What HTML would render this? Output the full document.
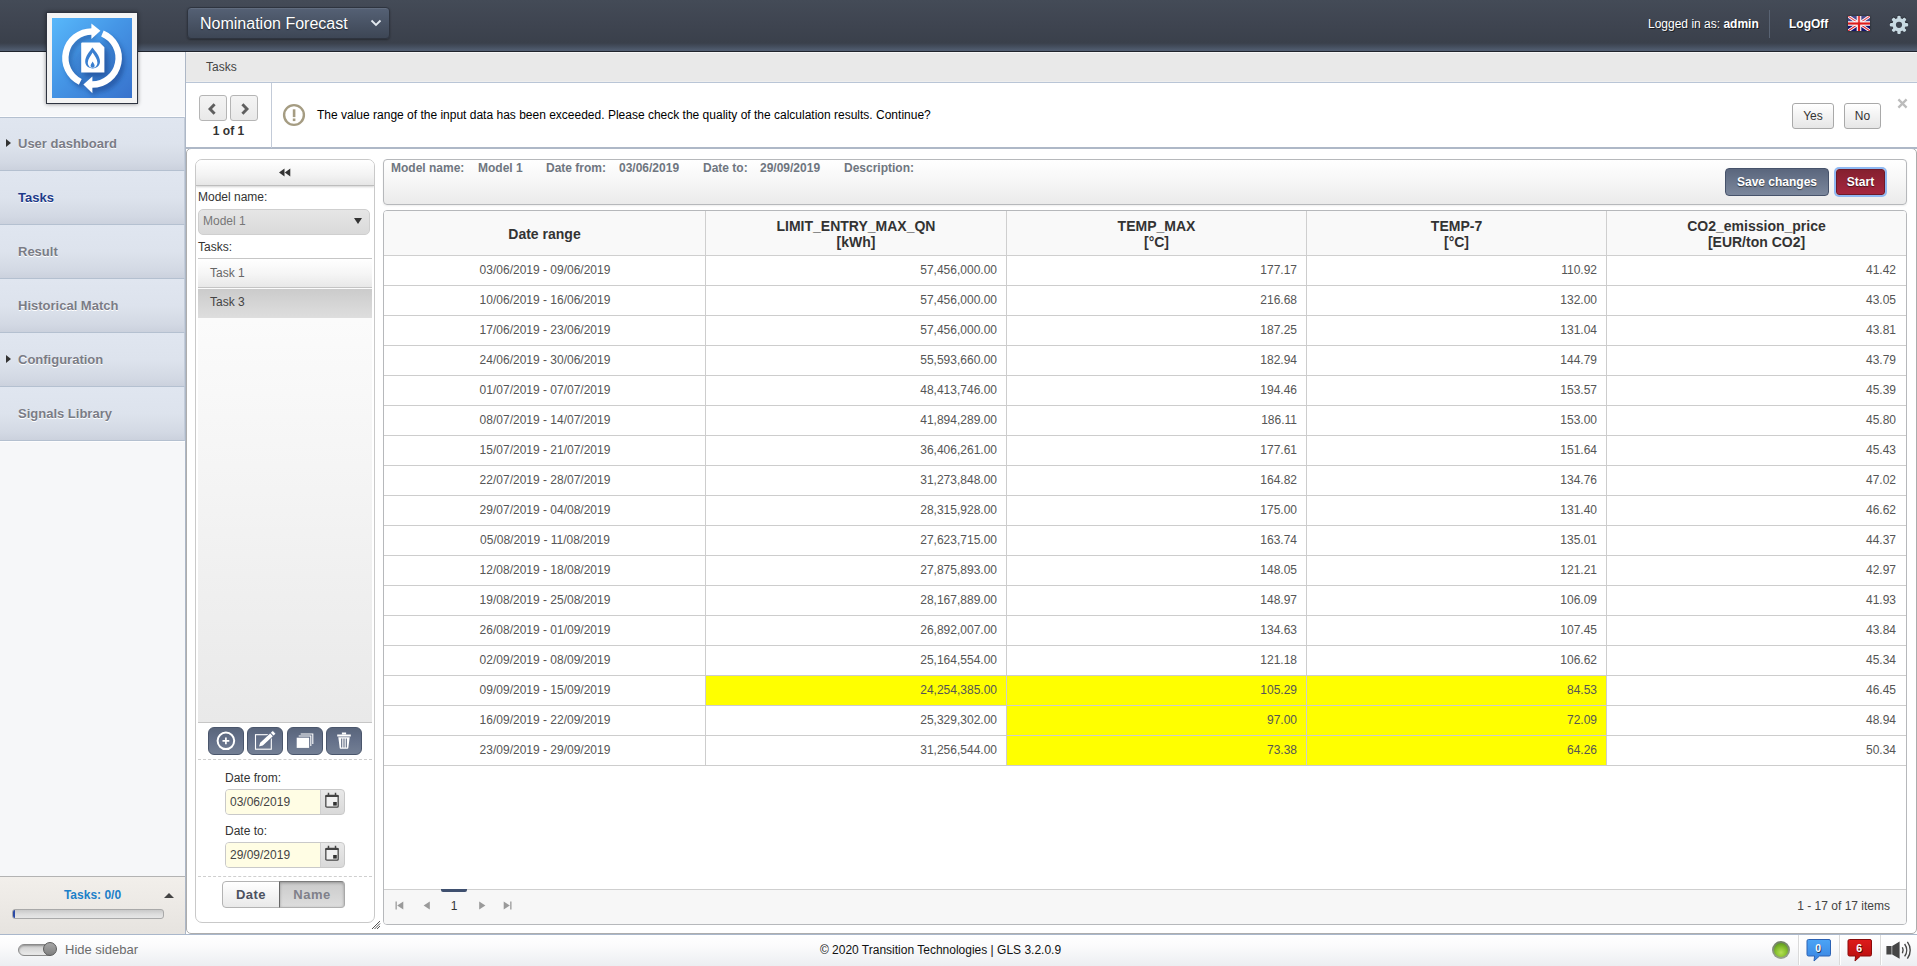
<!DOCTYPE html>
<html>
<head>
<meta charset="utf-8">
<title>Nomination Forecast</title>
<style>
*{box-sizing:border-box;margin:0;padding:0;}
html,body{width:1917px;height:966px;overflow:hidden;background:#fff;font-family:"Liberation Sans",sans-serif;font-size:12px;color:#333;}
.abs{position:absolute;}
/* header */
#hdr{position:absolute;left:0;top:0;width:1917px;height:52px;background:linear-gradient(#444b57 0px,#3f4551 22px,#3a404b 43px,#454f5f 47px,#525e71 50.6px,#1f242d 51px,#1f242d 52px);}
#appsel{position:absolute;left:187px;top:7px;width:203px;height:32px;border-radius:4px;border:1px solid #2e343f;background:linear-gradient(#556175,#3d4655);box-shadow:0 1px 2px rgba(0,0,0,.35),inset 0 1px 0 rgba(255,255,255,.08);color:#fff;font-size:16px;line-height:31px;padding-left:12px;text-shadow:0 1px 1px rgba(0,0,0,.5);}
#hdr .t{position:absolute;top:17px;color:#fff;font-size:12px;line-height:14px;text-shadow:1px 1px 0 rgba(0,0,0,.6);white-space:nowrap;}
/* sidebar */
#side{position:absolute;left:0;top:52px;width:186px;height:882px;background:#f6f7f9;border-right:1px solid #adb7c6;}
.mi{position:absolute;left:0;width:185px;height:54px;background:linear-gradient(#e0e6f0 0%,#dde3ed 50%,#d3d9e4 85%,#cbd1dd 100%);border-bottom:1px solid #b4c0d0;border-right:1px solid #c3ccd9;color:#7a7c86;font-weight:bold;font-size:13px;line-height:53px;padding-left:18px;text-shadow:0 1px 0 #fff;}
.mi .ar{position:absolute;left:6px;top:22px;width:0;height:0;border-left:5px solid #333;border-top:4px solid transparent;border-bottom:4px solid transparent;}
#logo{position:absolute;left:46px;top:12px;width:92px;height:92px;background:#f4f4f4;border:1px solid #2f3440;box-shadow:0 0 4px rgba(0,0,0,.45);}
#logo .in{position:absolute;left:5px;top:5px;width:80px;height:80px;background:linear-gradient(135deg,#58b8fb 0%,#4596e6 45%,#3872cc 100%);}
/* footer */
#ftr{position:absolute;left:0;top:934px;width:1917px;height:32px;border-top:1px solid #a9b7cb;background:linear-gradient(#ffffff 0%,#fbfbfc 35%,#eceef2 100%);}
/* main */
#crumb{position:absolute;left:186px;top:52px;width:1731px;height:31px;background:#e9e9e9;border-bottom:1px solid #b9c5d6;font-size:12px;line-height:31px;padding-left:20px;color:#444;box-shadow:inset 0 -1px 0 #eeeeee,inset 0 1px 0 #f6f6f6;}
#note{z-index:2;position:absolute;left:186px;top:83px;width:1731px;height:66px;background:#fff;border-bottom:2px solid #aeb8c7;}
.btnw{position:absolute;border:1px solid #a9a9a9;border-radius:3px;background:linear-gradient(#ffffff,#e6e6e6);color:#333;font-size:12px;text-align:center;}

/* notification */
.navb{position:absolute;top:12px;width:28px;height:26px;border:1px solid #b5b5b5;border-radius:3px;background:linear-gradient(#f4f4f4,#e9e9e9);}
/* content */
#content{position:absolute;left:186px;top:148px;width:1731px;height:786px;background:#fff;border:1px solid #adadad;border-radius:5px;}
#lp{position:absolute;left:195px;top:159px;width:180px;height:764px;border:1px solid #c9c9c9;border-radius:7px;background:#fff;overflow:hidden;}
#lph{position:absolute;left:0;top:0;width:178px;height:26px;background:linear-gradient(#ffffff,#f3f3f3 60%,#e6e6e6);border-bottom:1px solid #bdbdbd;box-shadow:0 1px 2px rgba(0,0,0,.18);}
.lbl{position:absolute;font-size:12px;line-height:14px;color:#333;white-space:nowrap;}
#msel{position:absolute;left:2px;top:49px;width:172px;height:26px;border:1px solid #cfcfcf;border-radius:5px;background:linear-gradient(#e6e6e6,#dadada);color:#777;font-size:12px;line-height:22px;padding-left:4px;}
#tlist{position:absolute;left:2px;top:98px;width:174px;height:465px;border-top:1px solid #c6c6c6;border-bottom:1px solid #c6c6c6;background:linear-gradient(#fbfbfb 60px,#f4f4f4 50%,#e9e9e9 100%);}
.ti{position:absolute;left:0;width:174px;height:30px;font-size:12px;line-height:28px;padding-left:12px;color:#666;}
.ib{position:absolute;top:567px;width:36px;height:28px;border:1px solid #4a566c;border-radius:6px;background:linear-gradient(#59657b,#65718a 50%,#737f94);overflow:hidden;}
.dash{position:absolute;left:2px;width:174px;height:0;border-top:1px dashed #cfcfcf;}
.dinp{position:absolute;left:29px;width:120px;height:26px;border:1px solid #c9c9c9;border-radius:4px;background:linear-gradient(#e9e9e9,#d9d9d9);overflow:hidden;}
.dinp .tx{position:absolute;left:0;top:0;width:95px;height:24px;background:#fffde4;border-right:1px solid #cfcfcf;font-size:12px;line-height:25px;padding-left:4px;color:#444;}
/* details */
#dp{position:absolute;left:383px;top:159px;width:1524px;height:46px;border:1px solid #b6b8bb;border-radius:4px;box-shadow:0 1px 2px rgba(0,0,0,.07);background:linear-gradient(#ffffff,#f6f6f6 50%,#ebebeb);}
#dp .d{position:absolute;top:1px;font-size:12px;line-height:14px;font-weight:bold;color:#6f7680;white-space:nowrap;}

/* grid */
#grid{position:absolute;left:383px;top:210px;width:1524px;height:715px;border:1px solid #b6b8bb;border-radius:4px;background:#fff;overflow:hidden;}
#gh{position:absolute;left:0;top:0;width:1522px;height:45px;background:#f9f9f9;border-bottom:1px solid #cfcfcf;}
.hc{position:absolute;top:0;height:45px;border-left:1px solid #cfcfcf;text-align:center;font-weight:bold;font-size:14px;line-height:16px;color:#333;padding-top:7px;}
.gr{position:absolute;left:0;width:1522px;height:30px;border-bottom:1px solid #cdcdcd;}
.gc{position:absolute;top:0;height:29px;border-left:1px solid #cdcdcd;font-size:12px;line-height:29px;color:#555;text-align:right;padding-right:9px;white-space:nowrap;}
.gc.c0{left:0;width:321px;border-left:0;text-align:center;padding-right:0;padding-left:1px;}
.c1{left:321px;width:301px;}
.c2{left:622px;width:300px;}
.c3{left:922px;width:300px;}
.c4{left:1222px;width:300px;padding-right:10px;}
.y{background:#ffff00;}
#pg{position:absolute;left:0;top:678px;width:1522px;height:36px;border-top:1px solid #cfcfcf;background:#f7f7f7;}
.bsave{position:absolute;left:1725px;top:168px;width:104px;height:28px;border:1px solid #46526a;border-radius:4px;background:linear-gradient(#5a667d,#7b879c);color:#fff;font-weight:bold;font-size:12px;line-height:26px;text-align:center;text-shadow:0 1px 1px rgba(0,0,0,.55);}
.bstart{position:absolute;left:1836px;top:169px;width:49px;height:26px;border:1px solid #6d1a2a;border-radius:3px;background:linear-gradient(#85202f,#a5263f);color:#fff;font-weight:bold;font-size:12px;line-height:24px;text-align:center;text-shadow:0 1px 1px rgba(0,0,0,.55);box-shadow:0 0 0 2px #8fb8f2;}

/* sidebar bottom */
#stask{position:absolute;left:0;top:876px;width:185px;height:58px;border-top:1px solid #b3b3b3;background:linear-gradient(#f2efeb,#ebe8e4 60%,#e6e3df);}
#pbar{position:absolute;left:12px;top:32px;width:152px;height:10px;border:1px solid #a9a9a9;border-radius:3px;background:linear-gradient(#c9c9c9,#dcdcdc 50%,#e6e6e6);overflow:hidden;}
.fcell{position:absolute;top:0;width:41px;height:30px;border-left:1px solid #dadada;box-shadow:inset 1px 0 0 #fff;}
.dnb{position:absolute;top:721px;height:27px;border:1px solid #b3b3b3;font-weight:bold;font-size:13px;line-height:25px;text-align:center;letter-spacing:.5px;}
</style>
</head>
<body>
<!-- HEADER -->
<div id="hdr">
  <div id="appsel">Nomination Forecast
    <svg class="abs" style="left:182px;top:11px" width="12" height="9" viewBox="0 0 12 9"><path d="M1.5 1.5 L6 6 L10.5 1.5" fill="none" stroke="#e4eaf0" stroke-width="1.8"/></svg>
  </div>
  <div class="t" style="left:1648px">Logged in as: <b>admin</b></div>
  <div class="abs" style="left:1769px;top:10px;width:1px;height:28px;background:#596373"></div>
  <div class="t" style="left:1789px;font-weight:bold">LogOff</div>
  <svg class="abs" style="left:1848px;top:16px;filter:drop-shadow(0 0 1px rgba(0,0,0,.5))" width="22" height="15" viewBox="0 0 60 40" preserveAspectRatio="none"><rect width="60" height="40" fill="#14146e"/><path d="M0 0 L60 40 M60 0 L0 40" stroke="#fff" stroke-width="8"/><path d="M0 0 L60 40 M60 0 L0 40" stroke="#e0242f" stroke-width="3"/><path d="M30 0 V40 M0 20 H60" stroke="#fff" stroke-width="12.5"/><path d="M30 0 V40" stroke="#dd1a1a" stroke-width="6.4"/><path d="M0 20 H60" stroke="#dd1a1a" stroke-width="6"/><rect width="60" height="17" fill="#fff" opacity=".22"/></svg>
  <svg class="abs" style="left:1889px;top:15px;filter:drop-shadow(0 -1px 0 rgba(15,18,24,.55))" width="20" height="20" viewBox="0 0 20 20"><g fill="#c9dae3"><g transform="translate(10 9.8)"><rect x="-1.7" y="-9.1" width="3.4" height="18.2" rx="1.2"/><rect x="-1.7" y="-9.1" width="3.4" height="18.2" rx="1.2" transform="rotate(45)"/><rect x="-1.7" y="-9.1" width="3.4" height="18.2" rx="1.2" transform="rotate(90)"/><rect x="-1.7" y="-9.1" width="3.4" height="18.2" rx="1.2" transform="rotate(135)"/><circle r="6.7"/></g></g><circle cx="10" cy="9.8" r="3.1" fill="#3f4551"/></svg>
</div>

<!-- SIDEBAR -->
<div id="side">
  <div class="abs" style="left:0;top:64px;width:185px;height:1px;background:#fdfdfe"></div>
  <div class="mi" style="top:65px;box-shadow:inset 0 1px 0 #b4c0d0"><span class="ar"></span>User dashboard</div>
  <div class="mi" style="top:119px;color:#1d3a8a">Tasks</div>
  <div class="mi" style="top:173px">Result</div>
  <div class="mi" style="top:227px">Historical Match</div>
  <div class="mi" style="top:281px"><span class="ar"></span>Configuration</div>
  <div class="mi" style="top:335px">Signals Library</div>
  <div class="abs" style="left:0;top:389px;width:185px;height:1px;background:#fdfdfe"></div>
</div>
<div id="stask">
  <div class="abs" style="left:0;top:11px;width:185px;text-align:center;font-weight:bold;font-size:12px;line-height:14px;color:#1b80c9">Tasks: 0/0</div>
  <div class="abs" style="left:164px;top:16px;width:0;height:0;border-bottom:5px solid #444;border-left:5px solid transparent;border-right:5px solid transparent"></div>
  <div id="pbar"><div class="abs" style="left:0;top:0;width:2px;height:8px;background:#2c4aa6"></div></div>
</div>
<div id="logo"><div class="in"><svg class="abs" style="left:0;top:0" width="80" height="80" viewBox="0 0 80 80">
<defs><radialGradient id="lg" cx="0.52" cy="0.56" r="0.42"><stop offset="0" stop-color="#1f4f95" stop-opacity=".45"/><stop offset=".75" stop-color="#2a5aa8" stop-opacity=".28"/><stop offset="1" stop-color="#2a5aa8" stop-opacity="0"/></radialGradient></defs>
<circle cx="43" cy="45" r="34" fill="url(#lg)"/>
<filter id="lb" x="-20%" y="-20%" width="140%" height="140%"><feGaussianBlur stdDeviation="2.6"/></filter>
<g transform="translate(3 4)" filter="url(#lb)" opacity=".5" fill="#163f86" stroke="#163f86"><path d="M28.3 63.9 A26.6 26.6 0 0 1 40 13.4" fill="none" stroke-width="6.5"/><path d="M50.4 15.5 A26.6 26.6 0 0 1 40 66.6" fill="none" stroke-width="6.5"/><path d="M40.4 58.4 L31.4 66.6 L40.4 75.2 Z" stroke="none"/><path d="M30.2 24.4 H47.6 L52.4 29.2 V54.4 H29.2 Z" stroke="none"/></g>
<path d="M28.3 63.9 A26.6 26.6 0 0 1 40 13.4" fill="none" stroke="#fff" stroke-width="6.5"/>
<path d="M39.4 5.4 L48.4 12.7 L39.4 20.9 Z" fill="#fff"/>
<path d="M50.4 15.5 A26.6 26.6 0 0 1 40 66.6" fill="none" stroke="#fff" stroke-width="6.5"/>
<path d="M40.4 58.4 L31.4 66.6 L40.4 75.2 Z" fill="#fff"/>
<path d="M30.2 24.4 H47.6 L52.4 29.2 V54.4 H29.2 V25.4 Q29.2 24.4 30.2 24.4 Z" fill="#fff"/>
<path d="M40.4 29.6 C43.6 33.6 48 38.4 48 43.6 C48 47.6 44.8 50.4 40.8 50.4 C36.4 50.4 33.2 47.6 33.2 43.6 C33.2 38.4 37.6 33.6 40.4 29.6 Z" fill="#3a7fd0"/>
<path d="M40.6 34.4 C42.6 37.6 45.4 41 45.4 44.6 C45.4 47.8 43.2 50 40.6 50 C38 50 35.8 47.8 35.8 44.6 C35.8 41 38.8 37.6 40.6 34.4 Z" fill="#fff"/>
<path d="M40.6 43.6 C41.6 45.2 42.6 46.4 42.6 47.8 C42.6 49 41.6 49.8 40.6 49.8 C39.6 49.8 38.6 49 38.6 47.8 C38.6 46.4 39.8 45.2 40.6 43.6 Z" fill="#3a7fd0"/>
</svg></div></div>

<!-- MAIN -->
<div id="crumb">Tasks</div>
<div id="note">
  <div class="navb" style="left:13px"><svg class="abs" style="left:7px;top:7px" width="10" height="12" viewBox="0 0 10 12"><path d="M7.6 1.2 L3 6 L7.6 10.8" fill="none" stroke="#5f5f5f" stroke-width="2.9"/></svg></div>
  <div class="navb" style="left:44px"><svg class="abs" style="left:9px;top:7px" width="10" height="12" viewBox="0 0 10 12"><path d="M2.4 1.2 L7 6 L2.4 10.8" fill="none" stroke="#5f5f5f" stroke-width="2.9"/></svg></div>
  <div class="abs" style="left:13px;top:41px;width:59px;text-align:center;font-weight:bold;font-size:12px;line-height:15px;color:#333">1 of 1</div>
  <div class="abs" style="left:85px;top:0;width:1px;height:65px;background:#c3cbd8"></div>
  <svg class="abs" style="left:96px;top:20px" width="24" height="24" viewBox="0 0 24 24"><circle cx="12" cy="12" r="9.9" fill="none" stroke="#a59c82" stroke-width="2.4"/><rect x="10.8" y="6.3" width="2.6" height="7.8" fill="#a59c82"/><rect x="10.8" y="15.5" width="2.6" height="2.6" fill="#a59c82"/></svg>
  <div class="abs" style="left:131px;top:25px;font-size:12px;line-height:14px;color:#000;white-space:nowrap">The value range of the input data has been exceeded. Please check the quality of the calculation results. Continue?</div>
  <div class="btnw" style="left:1606px;top:20px;width:42px;height:26px;line-height:24px">Yes</div>
  <div class="btnw" style="left:1658px;top:20px;width:37px;height:26px;line-height:24px">No</div>
  <svg class="abs" style="left:1711px;top:15px" width="11" height="11" viewBox="0 0 11 11"><path d="M1.4 1.4 L9.6 9.6 M9.6 1.4 L1.4 9.6" stroke="#bcbcbc" stroke-width="2.3" fill="none"/></svg>
</div>
<div id="content"></div>
<div id="lp">
  <div id="lph"><svg class="abs" style="left:83px;top:8px" width="12" height="9" viewBox="0 0 12 9"><path d="M0 4.5 L5.5 0.5 V8.5 Z M5.8 4.5 L11.3 0.5 V8.5 Z" fill="#333"/></svg></div>
  <div class="lbl" style="left:2px;top:30px">Model name:</div>
  <div id="msel">Model 1<span class="abs" style="left:155px;top:8px;width:0;height:0;border-top:6px solid #333;border-left:4px solid transparent;border-right:4px solid transparent"></span></div>
  <div class="lbl" style="left:2px;top:80px">Tasks:</div>
  <div id="tlist">
    <div class="ti" style="top:0;height:29px;background:linear-gradient(#ffffff,#f5f5f5 55%,#e8e8e8);border-bottom:1px solid #c4c4c4">Task 1</div>
    <div class="ti" style="top:30px;height:29px;line-height:27px;background:linear-gradient(#cbcbcb,#d5d5d5 50%,#dedede);color:#444">Task 3</div>
  </div>
  <div class="ib" style="left:12px"><svg class="abs" style="left:0;top:0" width="34" height="26" viewBox="0 0 34 26"><circle cx="16.9" cy="12.8" r="8.3" fill="none" stroke="#fff" stroke-width="2"/><path d="M16.9 9.4 V16.2 M13.5 12.8 H20.3" stroke="#fff" stroke-width="1.7"/></svg></div>
  <div class="ib" style="left:51px"><svg class="abs" style="left:0;top:0" width="34" height="26" viewBox="0 0 34 26"><rect x="7.5" y="6.7" width="15.8" height="14.5" fill="none" stroke="#fff" stroke-width="1.1"/><g stroke="#64718a" stroke-width="1.6" stroke-linejoin="round"><path d="M11 18.6 L14.81 17.58 L24.81 8.18 L22.19 5.42 L12.19 14.82 Z" fill="#fff"/><path d="M25.51 7.46 L27.41 5.67 L24.79 2.91 L22.89 4.7 Z" fill="#fff"/></g><path d="M11 18.6 L14.81 17.58 L24.81 8.18 L22.19 5.42 L12.19 14.82 Z" fill="#fff"/><path d="M25.51 7.46 L27.41 5.67 L24.79 2.91 L22.89 4.7 Z" fill="#fff"/></svg></div>
  <div class="ib" style="left:91px"><svg class="abs" style="left:0;top:0" width="34" height="26" viewBox="0 0 34 26"><path d="M12.7 6 H24.8 V16" fill="none" stroke="#fff" stroke-width="1.1"/><path d="M10.7 8 H22.8 V18" fill="none" stroke="#fff" stroke-width="1.1"/><rect x="8.7" y="9.7" width="12.4" height="10.2" fill="#fff"/></svg></div>
  <div class="ib" style="left:130px"><svg class="abs" style="left:0;top:0" width="34" height="26" viewBox="0 0 34 26"><path d="M14.9 4.6 H19.1 V6.6 H14.9 Z" fill="#fff"/><path d="M10.2 6.6 H23.8 V8.4 H10.2 Z" fill="#fff"/><path d="M11.3 9.2 H22.7 L21.3 20 Q21.2 20.8 20.4 20.8 H13.6 Q12.8 20.8 12.7 20 Z" fill="#fff"/><path d="M14.7 10.4 V19.4 M17 10.4 V19.4 M19.3 10.4 V19.4" stroke="#5d6980" stroke-width="1.1"/></svg></div>
  <div class="dash" style="top:599px"></div>
  <div class="lbl" style="left:29px;top:611px">Date from:</div>
  <div class="dinp" style="top:629px"><div class="tx">03/06/2019</div><svg class="abs" style="left:98px;top:2px" width="16" height="17" viewBox="0 0 15 16"><rect x="1.7" y="3.2" width="11.6" height="11.1" rx="1" fill="#f1f1f1" stroke="#444" stroke-width="1.2"/><path d="M1.2 3 H13.8 V4.7 H1.2 Z" fill="#444"/><path d="M4.2 0.8 V3.4 M10.8 0.8 V3.4" stroke="#444" stroke-width="1.4"/><rect x="8.6" y="9.4" width="3.4" height="3.4" fill="#333"/></svg></div>
  <div class="lbl" style="left:29px;top:664px">Date to:</div>
  <div class="dinp" style="top:682px"><div class="tx">29/09/2019</div><svg class="abs" style="left:98px;top:2px" width="16" height="17" viewBox="0 0 15 16"><rect x="1.7" y="3.2" width="11.6" height="11.1" rx="1" fill="#f1f1f1" stroke="#444" stroke-width="1.2"/><path d="M1.2 3 H13.8 V4.7 H1.2 Z" fill="#444"/><path d="M4.2 0.8 V3.4 M10.8 0.8 V3.4" stroke="#444" stroke-width="1.4"/><rect x="8.6" y="9.4" width="3.4" height="3.4" fill="#333"/></svg></div>
  <div class="dash" style="top:716px"></div>
  <div class="dnb" style="left:26px;width:58px;border-radius:4px 0 0 4px;background:linear-gradient(#ffffff,#e9e9e9);color:#4c5260">Date</div>
  <div class="dnb" style="left:83px;width:66px;border-radius:0 4px 4px 0;background:linear-gradient(#cbcbcb,#dddddd);color:#80808a;border-color:#7c7c7c #a8a8a8 #b0b0b0 #666;box-shadow:inset 0 1px 3px rgba(0,0,0,.28)">Name</div>
</div>
<svg class="abs" style="left:371px;top:920px" width="10" height="10" viewBox="0 0 10 10"><path d="M9 1 L1 9 M9 3.5 L3.5 9 M9 6 L6 9" stroke="#555" stroke-width="1" fill="none"/></svg>
<div id="dp">
  <div class="d" style="left:7px">Model name:</div>
  <div class="d" style="left:94px">Model 1</div>
  <div class="d" style="left:162px">Date from:</div>
  <div class="d" style="left:235px">03/06/2019</div>
  <div class="d" style="left:319px">Date to:</div>
  <div class="d" style="left:376px">29/09/2019</div>
  <div class="d" style="left:460px">Description:</div>
</div>
<div id="grid">
<div id="gh">
<div class="hc" style="left:0;width:321px;border-left:0;padding-top:15px">Date range</div>
<div class="hc" style="left:321px;width:301px">LIMIT_ENTRY_MAX_QN<br>[kWh]</div>
<div class="hc" style="left:622px;width:300px">TEMP_MAX<br>[&#176;C]</div>
<div class="hc" style="left:922px;width:300px">TEMP-7<br>[&#176;C]</div>
<div class="hc" style="left:1222px;width:300px">CO2_emission_price<br>[EUR/ton CO2]</div>
</div>
<div class="gr" style="top:45px">
<div class="gc c0">03/06/2019 - 09/06/2019</div>
<div class="gc c1">57,456,000.00</div>
<div class="gc c2">177.17</div>
<div class="gc c3">110.92</div>
<div class="gc c4">41.42</div>
</div>
<div class="gr" style="top:75px">
<div class="gc c0">10/06/2019 - 16/06/2019</div>
<div class="gc c1">57,456,000.00</div>
<div class="gc c2">216.68</div>
<div class="gc c3">132.00</div>
<div class="gc c4">43.05</div>
</div>
<div class="gr" style="top:105px">
<div class="gc c0">17/06/2019 - 23/06/2019</div>
<div class="gc c1">57,456,000.00</div>
<div class="gc c2">187.25</div>
<div class="gc c3">131.04</div>
<div class="gc c4">43.81</div>
</div>
<div class="gr" style="top:135px">
<div class="gc c0">24/06/2019 - 30/06/2019</div>
<div class="gc c1">55,593,660.00</div>
<div class="gc c2">182.94</div>
<div class="gc c3">144.79</div>
<div class="gc c4">43.79</div>
</div>
<div class="gr" style="top:165px">
<div class="gc c0">01/07/2019 - 07/07/2019</div>
<div class="gc c1">48,413,746.00</div>
<div class="gc c2">194.46</div>
<div class="gc c3">153.57</div>
<div class="gc c4">45.39</div>
</div>
<div class="gr" style="top:195px">
<div class="gc c0">08/07/2019 - 14/07/2019</div>
<div class="gc c1">41,894,289.00</div>
<div class="gc c2">186.11</div>
<div class="gc c3">153.00</div>
<div class="gc c4">45.80</div>
</div>
<div class="gr" style="top:225px">
<div class="gc c0">15/07/2019 - 21/07/2019</div>
<div class="gc c1">36,406,261.00</div>
<div class="gc c2">177.61</div>
<div class="gc c3">151.64</div>
<div class="gc c4">45.43</div>
</div>
<div class="gr" style="top:255px">
<div class="gc c0">22/07/2019 - 28/07/2019</div>
<div class="gc c1">31,273,848.00</div>
<div class="gc c2">164.82</div>
<div class="gc c3">134.76</div>
<div class="gc c4">47.02</div>
</div>
<div class="gr" style="top:285px">
<div class="gc c0">29/07/2019 - 04/08/2019</div>
<div class="gc c1">28,315,928.00</div>
<div class="gc c2">175.00</div>
<div class="gc c3">131.40</div>
<div class="gc c4">46.62</div>
</div>
<div class="gr" style="top:315px">
<div class="gc c0">05/08/2019 - 11/08/2019</div>
<div class="gc c1">27,623,715.00</div>
<div class="gc c2">163.74</div>
<div class="gc c3">135.01</div>
<div class="gc c4">44.37</div>
</div>
<div class="gr" style="top:345px">
<div class="gc c0">12/08/2019 - 18/08/2019</div>
<div class="gc c1">27,875,893.00</div>
<div class="gc c2">148.05</div>
<div class="gc c3">121.21</div>
<div class="gc c4">42.97</div>
</div>
<div class="gr" style="top:375px">
<div class="gc c0">19/08/2019 - 25/08/2019</div>
<div class="gc c1">28,167,889.00</div>
<div class="gc c2">148.97</div>
<div class="gc c3">106.09</div>
<div class="gc c4">41.93</div>
</div>
<div class="gr" style="top:405px">
<div class="gc c0">26/08/2019 - 01/09/2019</div>
<div class="gc c1">26,892,007.00</div>
<div class="gc c2">134.63</div>
<div class="gc c3">107.45</div>
<div class="gc c4">43.84</div>
</div>
<div class="gr" style="top:435px">
<div class="gc c0">02/09/2019 - 08/09/2019</div>
<div class="gc c1">25,164,554.00</div>
<div class="gc c2">121.18</div>
<div class="gc c3">106.62</div>
<div class="gc c4">45.34</div>
</div>
<div class="gr" style="top:465px">
<div class="gc c0">09/09/2019 - 15/09/2019</div>
<div class="gc c1 y">24,254,385.00</div>
<div class="gc c2 y">105.29</div>
<div class="gc c3 y">84.53</div>
<div class="gc c4">46.45</div>
</div>
<div class="gr" style="top:495px">
<div class="gc c0">16/09/2019 - 22/09/2019</div>
<div class="gc c1">25,329,302.00</div>
<div class="gc c2 y">97.00</div>
<div class="gc c3 y">72.09</div>
<div class="gc c4">48.94</div>
</div>
<div class="gr" style="top:525px">
<div class="gc c0">23/09/2019 - 29/09/2019</div>
<div class="gc c1">31,256,544.00</div>
<div class="gc c2 y">73.38</div>
<div class="gc c3 y">64.26</div>
<div class="gc c4">50.34</div>
</div>
<div id="pg">
  <div class="abs" style="left:57px;top:-1px;width:26px;height:3px;background:#3f506f;border-radius:0 0 2px 2px"></div>
  <div class="abs" style="left:57px;top:9px;width:26px;text-align:center;font-size:12px;line-height:15px;color:#333">1</div>
  <svg class="abs" style="left:11px;top:11px" width="9" height="9" viewBox="0 0 9 9"><path d="M0.5 0.5 H1.8 V8.5 H0.5 Z M8.3 0.5 V8.5 L2.2 4.5 Z" fill="#9a9a9a"/></svg>
  <svg class="abs" style="left:39px;top:11px" width="8" height="9" viewBox="0 0 8 9"><path d="M6.8 0.5 V8.5 L0.6 4.5 Z" fill="#9a9a9a"/></svg>
  <svg class="abs" style="left:94px;top:11px" width="8" height="9" viewBox="0 0 8 9"><path d="M1.2 0.5 V8.5 L7.4 4.5 Z" fill="#9a9a9a"/></svg>
  <svg class="abs" style="left:119px;top:11px" width="9" height="9" viewBox="0 0 9 9"><path d="M7.2 0.5 H8.5 V8.5 H7.2 Z M0.7 0.5 V8.5 L6.8 4.5 Z" fill="#9a9a9a"/></svg>
  <div class="abs" style="right:16px;top:9px;font-size:12px;line-height:15px;color:#444;white-space:nowrap">1 - 17 of 17 items</div>
</div>
</div>
<div class="bsave">Save changes</div>
<div class="bstart">Start</div>

<!-- FOOTER -->
<div id="ftr">
  <div class="abs" style="left:18px;top:9px;width:36px;height:12px;border:1px solid #8a8a8a;border-radius:6px;background:linear-gradient(#cdcdcd,#ebebeb);box-shadow:inset 0 1px 2px rgba(0,0,0,.3)"></div>
  <div class="abs" style="left:43px;top:7px;width:14px;height:14px;border:1px solid #5a5a5a;border-radius:7px;background:linear-gradient(#a6a6a6,#808080);"></div>
  <div class="abs" style="left:65px;top:7px;font-size:13px;line-height:16px;color:#6b6b6b">Hide sidebar</div>
  <div class="abs" style="left:0;top:8px;width:1881px;text-align:center;font-size:12px;line-height:14px;color:#111">&#169; 2020 Transition Technologies | GLS 3.2.0.9</div>
  <div class="abs" style="left:1772px;top:6px;width:18px;height:18px;border-radius:9px;background:linear-gradient(#6f7f62,#9aa58f);"></div>
  <div class="abs" style="left:1774px;top:8px;width:14px;height:14px;border-radius:7px;background:radial-gradient(circle at 50% 68%,#b4e055 0%,#8cc432 40%,#5a961c 85%);"></div>
  <div class="fcell" style="left:1798px"></div>
  <div class="fcell" style="left:1839px"></div>
  <div class="fcell" style="left:1880px;width:37px"></div>
  <svg class="abs" style="left:1806px;top:3px" width="26" height="24" viewBox="0 0 26 24"><defs><linearGradient id="gb" x1="0" y1="0" x2="0" y2="1"><stop offset="0" stop-color="#4ba4f6"/><stop offset="1" stop-color="#3a84e0"/></linearGradient></defs><path d="M2.5 1.5 H23 Q24.5 1.5 24.5 3 V16.5 Q24.5 18 23 18 H13.5 L8 23 L8.6 18 H2.5 Q1 18 1 16.5 V3 Q1 1.5 2.5 1.5 Z" fill="url(#gb)" stroke="#2c62b4" stroke-width="1"/><text x="12.8" y="14.8" font-family="Liberation Sans, sans-serif" font-size="10.5" font-weight="bold" fill="#1a2e55" text-anchor="middle">0</text><text x="12.2" y="14.2" font-family="Liberation Sans, sans-serif" font-size="10.5" font-weight="bold" fill="#fff" text-anchor="middle">0</text></svg>
  <svg class="abs" style="left:1847px;top:3px" width="26" height="24" viewBox="0 0 26 24"><defs><linearGradient id="gr" x1="0" y1="0" x2="0" y2="1"><stop offset="0" stop-color="#de1a1a"/><stop offset="1" stop-color="#b50e0e"/></linearGradient></defs><path d="M2.5 1.5 H23 Q24.5 1.5 24.5 3 V16.5 Q24.5 18 23 18 H13.5 L8 23 L8.6 18 H2.5 Q1 18 1 16.5 V3 Q1 1.5 2.5 1.5 Z" fill="url(#gr)" stroke="#8a0b0b" stroke-width="1"/><text x="12.8" y="14.8" font-family="Liberation Sans, sans-serif" font-size="10.5" font-weight="bold" fill="#4a0505" text-anchor="middle">6</text><text x="12.2" y="14.2" font-family="Liberation Sans, sans-serif" font-size="10.5" font-weight="bold" fill="#fff" text-anchor="middle">6</text></svg>
  <svg class="abs" style="left:1885px;top:5px" width="30" height="21" viewBox="0 0 30 21"><path d="M1.4 6 H6.6 V14.4 H1.4 Z M7.2 6 L14.6 1.6 V18.8 L7.2 14.4 Z" fill="#454545"/><path d="M17.4 7.2 A6.5 6.5 0 0 1 17.4 13.2" fill="none" stroke="#454545" stroke-width="1.4"/><path d="M19.6 4 A10.3 10.3 0 0 1 19.6 16.4" fill="none" stroke="#454545" stroke-width="1.4"/><path d="M22.4 1.8 A14 14 0 0 1 22.4 18.6" fill="none" stroke="#454545" stroke-width="1.4"/></svg>
</div>
</body>
</html>
